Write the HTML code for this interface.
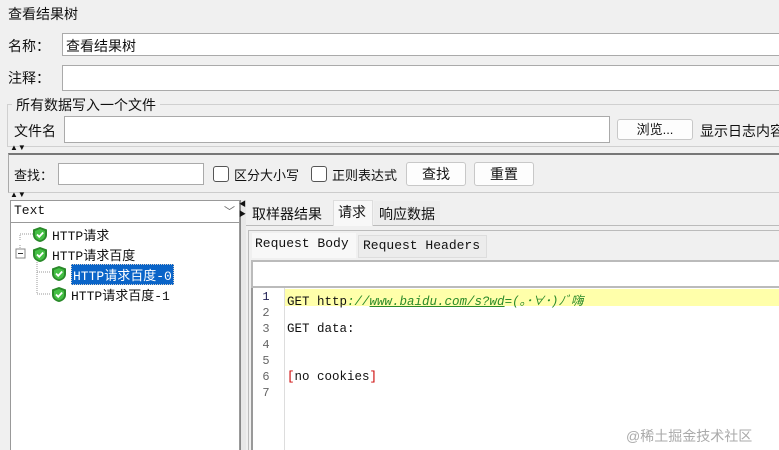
<!DOCTYPE html>
<html><head><meta charset="utf-8"><style>
*{margin:0;padding:0;box-sizing:border-box}
html{width:779px;height:450px;overflow:hidden}
body{width:779px;height:450px;overflow:hidden;background:#f0f0f0;position:relative;font-family:"Liberation Sans","Noto Sans CJK SC",sans-serif;font-size:14px;color:#111}
.a{position:absolute;white-space:nowrap}
.in{position:absolute;background:#fff;border:1px solid #aaa}
.btn{position:absolute;background:#fdfdfd;border:1px solid #c8c8c8;border-radius:3px;text-align:center;font-size:14px}
.mono{font-family:"Liberation Mono","Noto Sans CJK SC",monospace}
.cb{position:absolute;width:16px;height:16px;border:1px solid #555;border-radius:3px;background:#fff}
.shield{position:absolute;width:14px;height:15px}
.ln{position:absolute;left:256px;width:20px;text-align:center;font-family:"Liberation Mono",monospace;font-size:12px;color:#666}
.code{position:absolute;left:287px;font-family:"Liberation Mono","Noto Sans CJK SC",monospace;font-size:12.5px;color:#111}
</style></head><body>
<div class="a" style="left:8px;top:4px">查看结果树</div>
<div class="a" style="left:8px;top:36px">名称：</div>
<div class="in" style="left:62px;top:33px;width:717px;height:23px;border-right:none"></div>
<div class="a" style="left:66px;top:36px">查看结果树</div>
<div class="a" style="left:8px;top:68px">注释：</div>
<div class="in" style="left:62px;top:65px;width:717px;height:26px;border-right:none"></div>
<div style="position:absolute;left:7px;top:104px;width:772px;height:43px;border:1px solid #d0d0d0;border-right:none"></div>
<div class="a" style="left:12px;top:95px;background:#f0f0f0;padding:0 4px">所有数据写入一个文件</div>
<div class="a" style="left:14px;top:121px">文件名</div>
<div class="in" style="left:64px;top:116px;width:546px;height:27px"></div>
<div class="btn" style="left:617px;top:119px;width:76px;height:21px;font-size:13px;line-height:19px">浏览...</div>
<div class="a" style="left:700px;top:121px">显示日志内容</div>
<div class="a" style="left:10px;top:143px;font-size:8px">▲▼</div>
<div style="position:absolute;left:8px;top:153px;width:771px;height:40px;border-top:2px solid #777;border-left:1px solid #aaa;border-bottom:1px solid #ccc"></div>
<div class="a" style="left:14px;top:165px;font-size:13px">查找：</div>
<div class="in" style="left:58px;top:163px;width:146px;height:22px"></div>
<div class="cb" style="left:213px;top:166px"></div>
<div class="a" style="left:234px;top:165px;font-size:13px">区分大小写</div>
<div class="cb" style="left:311px;top:166px"></div>
<div class="a" style="left:332px;top:165px;font-size:13px">正则表达式</div>
<div class="btn" style="left:406px;top:162px;width:60px;height:24px;line-height:22px">查找</div>
<div class="btn" style="left:474px;top:162px;width:60px;height:24px;line-height:22px">重置</div>
<div class="a" style="left:10px;top:190px;font-size:8px">▲▼</div>
<div style="position:absolute;left:10px;top:200px;width:230px;height:250px;background:#fff;border:1px solid #999;border-bottom:none"></div>
<div style="position:absolute;left:10px;top:200px;width:230px;height:23px;border:1px solid #999;background:#fff"></div>
<div class="a mono" style="left:14px;top:203px;font-size:13px">Text</div>
<div class="a" style="left:224px;top:203px;font-size:11px;color:#666">﹀</div>
<svg style="position:absolute;left:10px;top:223px" width="230" height="90">
<g stroke="#999" stroke-dasharray="1,1" fill="none">
<path d="M23 11H30M10 22V31M10 17V11H23M27 39V71M27 49H40M27 71H40"/>
</g>
<rect x="6" y="26" width="9" height="9" fill="#fff" stroke="#888"/><path d="M8 30.5H13" stroke="#333"/>
</svg>
<svg width="0" height="0" style="position:absolute"><defs><g id="sh"><path d="M7 0L14 2.5V8C14 12 10 14.5 7 15C4 14.5 0 12 0 8V2.5Z" fill="#2a8a2a"/><path d="M7 2L12 4V8C12 11 9.5 12.8 7 13.2C4.5 12.8 2 11 2 8V4Z" fill="#44c044"/><path d="M4 7.5L6.2 9.8L10.2 5.5" stroke="#fff" stroke-width="1.8" fill="none"/></g></defs></svg>
<svg class="shield" style="left:33px;top:227px" viewBox="0 0 14 15"><use href="#sh"/></svg>
<svg class="shield" style="left:33px;top:247px" viewBox="0 0 14 15"><use href="#sh"/></svg>
<svg class="shield" style="left:52px;top:266px" viewBox="0 0 14 15"><use href="#sh"/></svg>
<svg class="shield" style="left:52px;top:287px" viewBox="0 0 14 15"><use href="#sh"/></svg>
<div class="a mono" style="left:52px;top:225px;font-size:13px">HTTP请求</div>
<div class="a mono" style="left:52px;top:245px;font-size:13px">HTTP请求百度</div>
<div class="a mono" style="left:71px;top:264px;font-size:13px;background:#0a64c8;color:#fff;border:1px dotted #ccc;padding:0 1px">HTTP请求百度-0</div>
<div class="a mono" style="left:71px;top:285px;font-size:13px">HTTP请求百度-1</div>
<div style="position:absolute;left:240px;top:200px;width:6px;height:250px;background:#e8e8e8;border-left:1px solid #888"></div>
<div class="a" style="left:239px;top:199px;font-size:7px">◀<br>▶</div>
<div style="position:absolute;left:246px;top:225px;width:533px;height:1px;background:#bbb"></div>
<div class="a" style="left:252px;top:204px">取样器结果</div>
<div style="position:absolute;left:333px;top:200px;width:40px;height:26px;background:#f8f8f8;border:1px solid #ddd;border-bottom:none"></div>
<div class="a" style="left:338px;top:202px">请求</div>
<div style="position:absolute;left:374px;top:201px;width:66px;height:24px;background:#ececec"></div>
<div class="a" style="left:379px;top:204px">响应数据</div>
<div style="position:absolute;left:248px;top:230px;width:531px;height:220px;border:1px solid #bbb;border-right:none;border-bottom:none;background:#f0f0f0"></div>
<div style="position:absolute;left:252px;top:233px;width:104px;height:25px;background:#f8f8f8"></div>
<div class="a mono" style="left:255px;top:236px;font-size:13px">Request Body</div>
<div style="position:absolute;left:358px;top:235px;width:129px;height:23px;background:#ececec;border:1px solid #ddd"></div>
<div class="a mono" style="left:363px;top:238px;font-size:13px">Request Headers</div>
<div style="position:absolute;left:251px;top:260px;width:528px;height:28px;background:#fff;border:2px solid #bbb;border-right:none"></div>
<div style="position:absolute;left:251px;top:288px;width:528px;height:162px;background:#fff;border-left:2px solid #999"></div>
<div style="position:absolute;left:284px;top:288px;width:1px;height:162px;background:#ddd"></div>
<div style="position:absolute;left:285px;top:289px;width:494px;height:17px;background:#ffffaa"></div>
<div class="ln" style="top:290px;color:#225">1</div>
<div class="ln" style="top:306px">2</div>
<div class="ln" style="top:322px">3</div>
<div class="ln" style="top:338px">4</div>
<div class="ln" style="top:354px">5</div>
<div class="ln" style="top:370px">6</div>
<div class="ln" style="top:386px">7</div>
<div class="code" style="top:290px">GET http<span style="color:#2a8a2a;font-style:italic">://<u>www.baidu.com/s?wd</u>=(｡･∀･)ﾉﾞ嗨</span></div>
<div class="code" style="top:322px">GET data:</div>
<div class="code" style="top:370px"><span style="color:#c00">[</span>no cookies<span style="color:#c00">]</span></div>
<div class="a" style="left:626px;top:426px;font-size:14px;color:#aaa">@稀土掘金技术社区</div>
</body></html>
